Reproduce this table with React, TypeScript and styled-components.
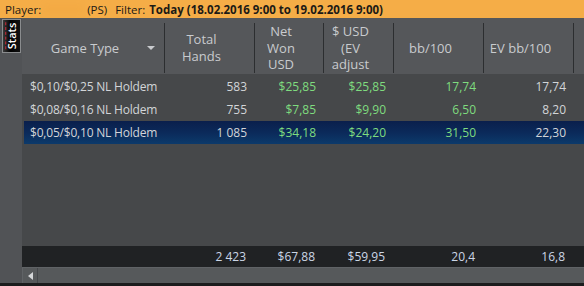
import React from 'react';
import styled, { createGlobalStyle, css } from 'styled-components';

const GlobalStyle = createGlobalStyle`
  html, body {
    margin: 0;
    padding: 0;
    background: #1a1b1c;
  }
  * {
    box-sizing: border-box;
  }
`;

// колонки таблицы
const COLUMNS = '143px 90px 69px 70px 90px 90px 1fr';

const Window = styled.div`
  width: 584px;
  height: 286px;
  display: flex;
  flex-direction: column;
  overflow: hidden;
  font-family: 'Open Sans', 'Noto Sans', sans-serif;
  background: #55575a;
`;

const TopBar = styled.div`
  height: 18px;
  flex: 0 0 18px;
  display: flex;
  align-items: center;
  padding-left: 5px;
  background: #f5ad47;
  color: #1c1a16;
  font-size: 11.5px;
  white-space: nowrap;
`;

const PlayerName = styled.span`
  display: inline-block;
  width: 36px;
  height: 10px;
  margin: 0 6px 0 4px;
  background: #f3aa44;
  filter: blur(2px);
`;

const FilterLabel = styled.span`
  margin-left: 8px;
`;

const Bold = styled.b`
  margin-left: 4px;
  font-weight: 700;
`;

const Main = styled.div`
  flex: 1;
  display: flex;
  min-height: 0;
`;

const LeftStrip = styled.div`
  width: 22px;
  flex: 0 0 22px;
  background: #515356;
  padding: 1px 0 0 2px;
`;

const StatsTab = styled.div`
  width: 19px;
  height: 34px;
  border: 1px solid #8a8c8e;
  background: linear-gradient(90deg, #3a3a3a 0%, #000 45%, #111 100%);
  display: flex;
  align-items: center;
  justify-content: center;
`;

const StatsText = styled.span`
  transform: rotate(-90deg);
  color: #fff;
  font-size: 11px;
  font-weight: 600;
  border-top: 1px dashed #d02a3a;
  line-height: 11px;
`;

const Content = styled.div`
  flex: 1;
  display: flex;
  flex-direction: column;
  min-width: 0;
`;

const HeaderRow = styled.div`
  height: 56px;
  flex: 0 0 56px;
  display: grid;
  grid-template-columns: ${COLUMNS};
  background: #55575a;
  padding: 5px 0 3px;
`;

const HeaderCell = styled.div<{ $last?: boolean }>`
  position: relative;
  display: flex;
  align-items: center;
  justify-content: center;
  padding-right: 16px;
  color: #c9cbce;
  font-size: 13px;
  line-height: 16.5px;
  text-align: center;
  ${({ $last }) =>
    !$last &&
    css`
      border-right: 1px solid #2c2e30;
    `}
`;

const SortArrow = styled.span`
  position: absolute;
  right: 9px;
  top: 23px;
  width: 0;
  height: 0;
  border-left: 4px solid transparent;
  border-right: 4px solid transparent;
  border-top: 4px solid #c9cbce;
`;

const Body = styled.div`
  flex: 1;
  background: #46484a;
  padding: 1px 0 0 2px;
`;

const Row = styled.div<{ $selected?: boolean }>`
  display: grid;
  grid-template-columns: 141px 90px 69px 70px 90px 90px 1fr;
  height: 23px;
  align-items: center;
  font-size: 12px;
  ${({ $selected }) =>
    $selected &&
    css`
      background: linear-gradient(180deg, #0a1f4c 0%, #0b2a5a 50%, #0c3a6b 100%);
    `}
`;

const Cell = styled.div<{ $tone?: 'green' | 'plain'; $left?: boolean }>`
  padding: ${({ $left }) => ($left ? '0 0 0 6px' : '0 8px 0 0')};
  text-align: ${({ $left }) => ($left ? 'left' : 'right')};
  letter-spacing: ${({ $left }) => ($left ? '-0.2px' : '0')};
  color: ${({ $tone }) => ($tone === 'green' ? '#7fdc7f' : '#d2d5d8')};
  white-space: nowrap;
  overflow: hidden;
`;

const TotalsRow = styled.div`
  height: 21px;
  flex: 0 0 21px;
  display: grid;
  grid-template-columns: ${COLUMNS};
  align-items: center;
  background: #202224;
  font-size: 12px;
  color: #cbd6e6;
`;

const TotalCell = styled.div`
  text-align: right;
  padding-right: 9px;
  white-space: nowrap;
`;

const ScrollBar = styled.div`
  height: 16px;
  flex: 0 0 16px;
  display: flex;
  background: #56595b;
  border-top: 1px solid #606366;
`;

const ScrollButton = styled.div`
  width: 16px;
  display: flex;
  align-items: center;
  justify-content: center;
  border-right: 1px solid #44474a;
  border-left: 1px solid #606366;
`;

const ArrowLeft = styled.span`
  width: 0;
  height: 0;
  border-top: 4px solid transparent;
  border-bottom: 4px solid transparent;
  border-right: 5px solid #d4d6d8;
`;

const BottomEdge = styled.div`
  height: 3px;
  flex: 0 0 3px;
  background: #1b1c1d;
`;

type StatRow = {
  game: string;
  hands: string;
  netWon: string;
  evUsd: string;
  bb: string;
  evBb: string;
  selected?: boolean;
};

const rows: StatRow[] = [
  { game: '$0,10/$0,25 NL Holdem', hands: '583', netWon: '$25,85', evUsd: '$25,85', bb: '17,74', evBb: '17,74' },
  { game: '$0,08/$0,16 NL Holdem', hands: '755', netWon: '$7,85', evUsd: '$9,90', bb: '6,50', evBb: '8,20' },
  { game: '$0,05/$0,10 NL Holdem', hands: '1 085', netWon: '$34,18', evUsd: '$24,20', bb: '31,50', evBb: '22,30', selected: true },
];

const App = () => {
  return (
    <>
      <GlobalStyle />
      <Window>
        <TopBar>
          Player:
          <PlayerName />
          (PS)
          <FilterLabel>Filter:</FilterLabel>
          <Bold>Today (18.02.2016 9:00 to 19.02.2016 9:00)</Bold>
        </TopBar>
        <Main>
          <LeftStrip>
            <StatsTab>
              <StatsText>Stats</StatsText>
            </StatsTab>
          </LeftStrip>
          <Content>
            <HeaderRow>
              <HeaderCell>
                Game Type
                <SortArrow />
              </HeaderCell>
              <HeaderCell>
                Total
                <br />
                Hands
              </HeaderCell>
              <HeaderCell>
                Net
                <br />
                Won
                <br />
                USD
              </HeaderCell>
              <HeaderCell>
                $ USD
                <br />
                (EV
                <br />
                adjust
              </HeaderCell>
              <HeaderCell>bb/100</HeaderCell>
              <HeaderCell>EV bb/100</HeaderCell>
              <HeaderCell $last />
            </HeaderRow>
            <Body>
              {rows.map((r) => (
                <Row key={r.game} $selected={r.selected}>
                  <Cell $left>{r.game}</Cell>
                  <Cell>{r.hands}</Cell>
                  <Cell $tone="green">{r.netWon}</Cell>
                  <Cell $tone="green">{r.evUsd}</Cell>
                  <Cell $tone="green">{r.bb}</Cell>
                  <Cell>{r.evBb}</Cell>
                  <Cell />
                </Row>
              ))}
            </Body>
            <TotalsRow>
              <TotalCell />
              <TotalCell>2 423</TotalCell>
              <TotalCell>$67,88</TotalCell>
              <TotalCell>$59,95</TotalCell>
              <TotalCell>20,4</TotalCell>
              <TotalCell>16,8</TotalCell>
              <TotalCell />
            </TotalsRow>
            <ScrollBar>
              <ScrollButton>
                <ArrowLeft />
              </ScrollButton>
            </ScrollBar>
          </Content>
        </Main>
        <BottomEdge />
      </Window>
    </>
  );
};

export default App;
